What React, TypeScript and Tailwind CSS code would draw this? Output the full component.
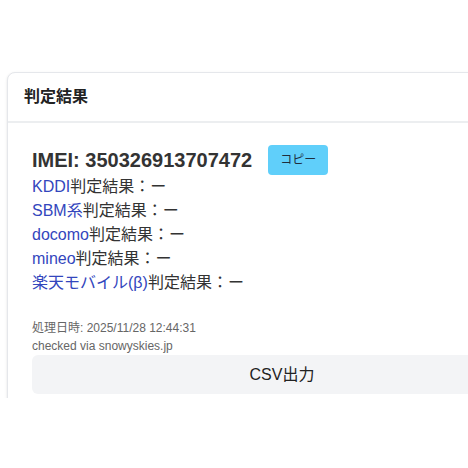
import React from 'react';

const carriers = ['KDDI', 'SBM系', 'docomo', 'mineo', '楽天モバイル(β)'];

export default function App() {
  return (
    <div
      className="w-[468px] h-[468px] bg-white overflow-hidden"
      style={{ fontFamily: '"Liberation Sans", Arial, "Noto Sans CJK JP", sans-serif' }}
    >
      <div className="pt-[72px] pl-[7px] h-[398px] overflow-hidden">
        <div className="w-[550px] rounded-lg border border-[#e5e7eb] bg-white shadow-sm">
          <div className="h-[50px] px-4 flex items-center border-b-2 border-[#eceef0]">
            <h2 className="text-base font-bold text-[#222]">判定結果</h2>
          </div>
          <div className="px-6 pt-[22px] pb-6">
            <div className="flex items-center gap-4 h-[30px]">
              <span className="text-[20px] font-bold text-[#333]">IMEI: 350326913707472</span>
              <button className="h-[30px] w-[60px] rounded bg-[#60cffa] text-xs text-[#1f2d3d]">
                コピー
              </button>
            </div>
            <ul className="text-base text-[#333] leading-6">
              {carriers.map((c) => (
                <li key={c}>
                  <a className="text-[#3346bd]">{c}</a>判定結果：ー
                </li>
              ))}
            </ul>
            <div className="mt-[24px] text-xs text-[#666] leading-[18px]">
              <div>処理日時: 2025/11/28 12:44:31</div>
              <div>checked via snowyskies.jp</div>
            </div>
            <button className="w-full h-[39px] rounded-md bg-[#f3f4f6] text-base text-[#222]">
              CSV出力
            </button>
          </div>
        </div>
      </div>
    </div>
  );
}
